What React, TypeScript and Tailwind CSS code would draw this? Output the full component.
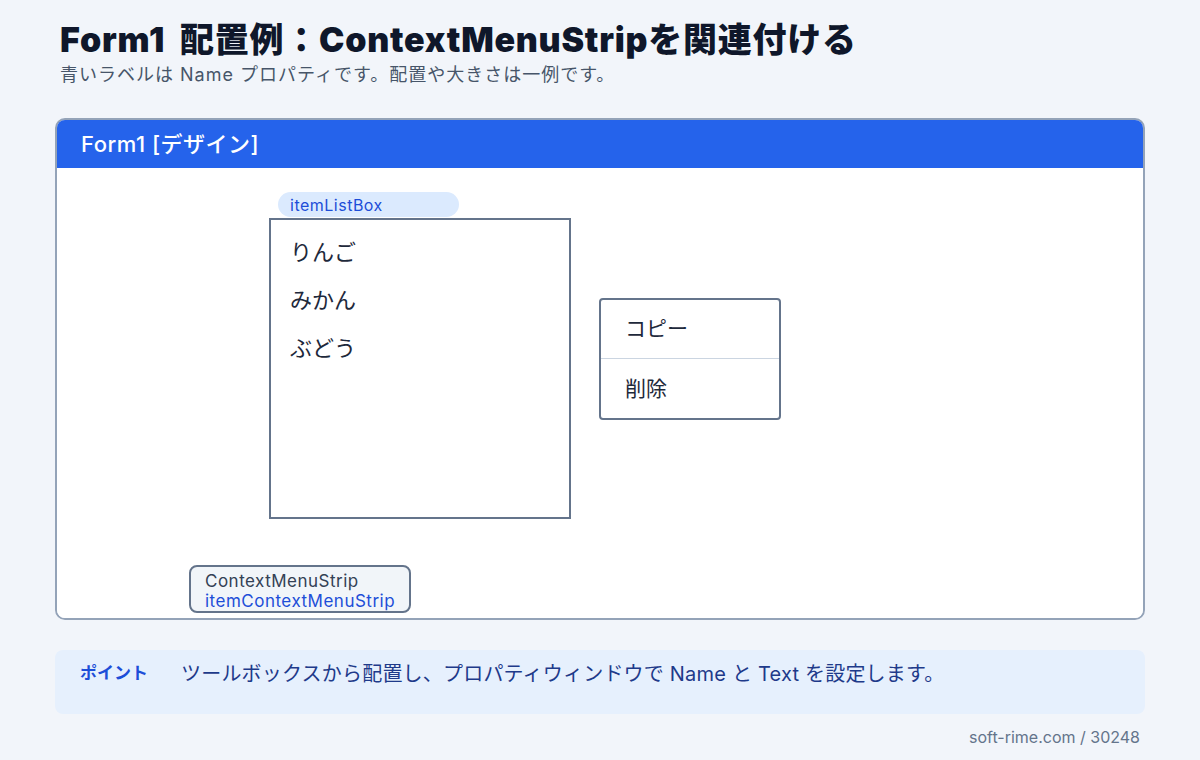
import React from 'react';

const FONT = { fontFamily: 'Inter, "Noto Sans CJK JP", sans-serif' };

const fruits = ['りんご', 'みかん', 'ぶどう'];

const DesignerCanvas: React.FC = () => (
  <div className="relative h-[450px] bg-white">
    {/* ListBox name tag */}
    <div className="absolute left-[221px] top-[24px] flex h-[25px] w-[181px] items-center rounded-full bg-[#dbeafe] pl-3 text-[16px] tracking-[0.5px] text-[#1d4ed8]">
      itemListBox
    </div>

    {/* ListBox */}
    <div className="absolute left-[212px] top-[50px] h-[301px] w-[302px] border-2 border-[#64748b] bg-white pl-[19px] pt-[14px]">
      {fruits.map(f => (
        <div key={f} className="h-[48px] text-[22px] leading-[36px] text-[#1e293b]">
          {f}
        </div>
      ))}
    </div>

    {/* ContextMenuStrip preview */}
    <div className="absolute left-[542px] top-[130px] w-[182px] rounded-[4px] border-2 border-[#64748b] bg-white">
      <div className="flex h-[58px] items-center pl-[24px] text-[21px] text-[#1e293b]">コピー</div>
      <div className="h-px bg-[#cbd5e1]" />
      <div className="flex h-[59px] items-center pl-[24px] text-[21px] text-[#1e293b]">削除</div>
    </div>

    {/* Component tray item */}
    <div className="absolute left-[132px] top-[397px] flex h-[48px] w-[222px] flex-col justify-center rounded-[8px] border-2 border-[#64748b] bg-[#f1f5f9] pl-[14px] pt-[4px] text-[17px] leading-[20px] tracking-[0.5px]">
      <span className="text-[#334155]">ContextMenuStrip</span>
      <span className="text-[#1d4ed8]">itemContextMenuStrip</span>
    </div>
  </div>
);

const App: React.FC = () => {
  return (
    <div className="h-[760px] w-[1200px] bg-[#f2f5fa] px-[55px] pt-[18px]" style={FONT}>
      <h1 className="pl-[5px] text-[34px] font-black leading-[44px] tracking-[0.75px] text-[#0f172a]">
        Form1&nbsp; 配置例：ContextMenuStripを関連付ける
      </h1>
      <p className="pl-[5px] text-[18px] leading-[26px] tracking-[1px] text-[#475569]">
        青いラベルは Name プロパティです。配置や大きさは一例です。
      </p>

      <div className="mt-[30px] overflow-hidden rounded-[10px] border-2 border-[#94a3b8]">
        <div className="flex h-[48px] items-center bg-[#2563eb] pl-[24px] text-[22px] font-medium tracking-[0.5px] text-white">
          Form1&nbsp;[デザイン]
        </div>
        <DesignerCanvas />
      </div>

      <div className="mt-[30px] flex h-[64px] items-start rounded-[8px] bg-[#e6f0fd] pl-[25px] pt-[10px]">
        <span className="w-[101px] text-[17px] font-bold leading-[26px] text-[#1d4ed8]">ポイント</span>
        <span className="text-[20px] leading-[28px] tracking-[0.2px] text-[#1e3a8a]">
          ツールボックスから配置し、プロパティウィンドウで Name と Text を設定します。
        </span>
      </div>

      <div className="mt-[12px] pr-[5px] text-right text-[16px] leading-[22px] text-[#64748b]">
        soft-rime.com / 30248
      </div>
    </div>
  );
};

export default App;
